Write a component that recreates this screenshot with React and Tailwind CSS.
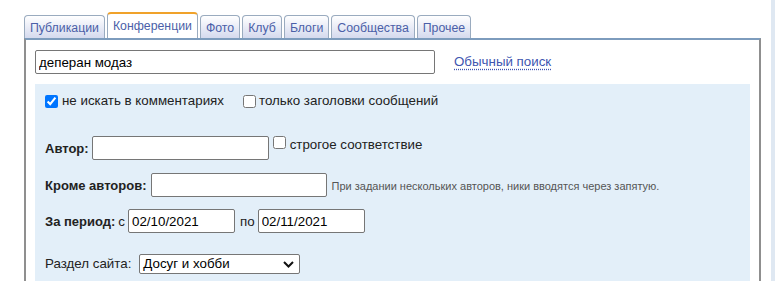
import React from "react";

const tabs = [
  { label: "Публикации" },
  { label: "Конференции", active: true },
  { label: "Фото" },
  { label: "Клуб" },
  { label: "Блоги" },
  { label: "Сообщества" },
  { label: "Прочее" },
];

function Tab({ label, active }) {
  if (active) {
    return (
      <div className="h-[26px] px-[5px] flex items-center bg-white border border-[#9aabbf] border-t-2 border-t-[#f0a22a] border-b-0 rounded-t-[4px] text-[#4b5fa8] text-[12.3px] leading-none pt-[1px]">
        {label}
      </div>
    );
  }
  return (
    <div className="h-[23px] px-[5px] flex items-center bg-gradient-to-b from-white to-[#d5daee] border border-[#9aabbf] border-b-0 rounded-t-[4px] text-[#4b5fa8] text-[12.3px] leading-none pt-[2px]">
      {label}
    </div>
  );
}

const inputCls =
  "h-[24px] border border-[#767676] rounded-[2px] bg-white px-[3px] text-[13.33px] text-black outline-none";

export default function App() {
  return (
    <div
      className="w-[775px] h-[281px] overflow-hidden bg-white flex text-[13.33px] text-[#222]"
      style={{ fontFamily: '"Liberation Sans", Arial, sans-serif' }}
    >
      <div className="pl-[24px] w-[761px] shrink-0 flex flex-col">
        <div className="h-[38px] shrink-0 flex items-end gap-[2px]">
          {tabs.map((t) => (
            <Tab key={t.label} {...t} />
          ))}
        </div>
        <div className="flex-1 min-h-0 border-l-2 border-r-2 border-l-[#8f8f8f] border-r-[#8f8f8f] border-t-2 border-t-[#7d9cbd] px-[9px] pt-[10px]">
          <div className="flex items-center">
            <input
              className={inputCls + " w-[400px]"}
              defaultValue="деперан модаз"
              spellCheck={false}
            />
            <a className="ml-[19px] text-[#4055b0] text-[13.33px] underline decoration-dotted decoration-[#4055b0] underline-offset-[3px]">
              Обычный поиск
            </a>
          </div>
          <div className="mt-[10px] bg-[#e3eff9] h-[300px] pl-[10px] pt-[10px] flex flex-col">
            <div className="flex items-center h-[14px]">
              <input type="checkbox" defaultChecked className="w-[13px] h-[13px] m-0" />
              <span className="ml-[4px]">не искать в комментариях</span>
              <input type="checkbox" className="ml-[19px] w-[13px] h-[13px] m-0" />
              <span className="ml-[3px]">только заголовки сообщений</span>
            </div>

            <div className="mt-[28px] flex items-baseline">
              <span className="font-bold text-[13px]">Автор:</span>
              <input className={inputCls + " ml-[3px] w-[177px]"} />
              <div className="self-start flex items-start ml-[4px]">
                <input type="checkbox" className="w-[13px] h-[13px] m-0" />
                <span className="ml-[4px] -mt-[1px]">строгое соответствие</span>
              </div>
            </div>

            <div className="mt-[13px] flex items-baseline">
              <span className="font-bold text-[13px]">Кроме авторов:</span>
              <input className={inputCls + " ml-[4px] w-[176px]"} />
              <span className="ml-[5px] text-[11px] text-[#555]">
                При задании нескольких авторов, ники вводятся через запятую.
              </span>
            </div>

            <div className="mt-[12px] flex items-baseline">
              <span className="font-bold text-[13px]">За период:</span>
              <span className="ml-[3px]">с</span>
              <input className={inputCls + " ml-[3px] w-[107px]"} defaultValue="02/10/2021" />
              <span className="ml-[5px]">по</span>
              <input className={inputCls + " ml-[3px] w-[107px]"} defaultValue="02/11/2021" />
            </div>

            <div className="mt-[21px] flex items-center">
              <span>Раздел сайта:</span>
              <div className="relative ml-[8px] w-[161px] h-[20px] border border-[#767676] rounded-[2px] bg-white flex items-center">
                <span className="pl-[3px] text-[13.33px] text-black">Досуг и хобби</span>
                <svg
                  className="absolute right-[5px] top-[6px]"
                  width="11"
                  height="7"
                  viewBox="0 0 11 7"
                >
                  <path d="M1 1 L5.5 5.5 L10 1" fill="none" stroke="#111" strokeWidth="2" />
                </svg>
              </div>
            </div>
          </div>
        </div>
      </div>
      <div className="ml-[10px] flex-1 bg-[#dfe8f2]" />
    </div>
  );
}
